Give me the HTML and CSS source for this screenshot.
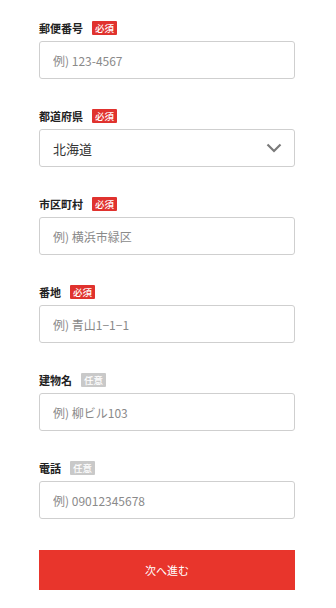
FILE: index.html
```html
<!DOCTYPE html>
<html lang="ja">
<head>
<meta charset="utf-8">
<link rel="stylesheet" href="styles.css">
</head>
<body>
<form class="form">
  <div class="field">
    <div class="label-row"><span class="label">郵便番号</span><span class="badge req">必須</span></div>
    <input class="input" type="text" placeholder="例) 123-4567">
  </div>
  <div class="field">
    <div class="label-row"><span class="label">都道府県</span><span class="badge req">必須</span></div>
    <div class="select">
      <span class="select-value">北海道</span>
      <svg class="chevron" width="16" height="10" viewBox="0 0 16 10"><path d="M1.5 1.5 L8 8 L14.5 1.5" fill="none" stroke="#7a7a7a" stroke-width="2.2"/></svg>
    </div>
  </div>
  <div class="field">
    <div class="label-row"><span class="label">市区町村</span><span class="badge req">必須</span></div>
    <input class="input" type="text" placeholder="例) 横浜市緑区">
  </div>
  <div class="field">
    <div class="label-row"><span class="label">番地</span><span class="badge req">必須</span></div>
    <input class="input" type="text" placeholder="例) 青山1−1−1">
  </div>
  <div class="field">
    <div class="label-row"><span class="label">建物名</span><span class="badge opt">任意</span></div>
    <input class="input" type="text" placeholder="例) 柳ビル103">
  </div>
  <div class="field">
    <div class="label-row"><span class="label">電話</span><span class="badge opt">任意</span></div>
    <input class="input" type="text" placeholder="例) 09012345678">
  </div>
  <button class="submit" type="button">次へ進む</button>
</form>
</body>
</html>
```
FILE: styles.css
```css
html, body {
  margin: 0;
  padding: 0;
  background: #fff;
}
body {
  font-family: "Noto Sans CJK JP", "Liberation Sans", sans-serif;
  color: #333;
}
.form {
  width: 256px;
  margin-left: 39px;
  padding-top: 21px;
  display: flex;
  flex-direction: column;
  gap: 30px;
}
.field {
  display: flex;
  flex-direction: column;
  gap: 6px;
}
.label-row {
  display: flex;
  align-items: center;
  gap: 9px;
  height: 14px;
}
.label {
  font-size: 11px;
  font-weight: 700;
  color: #222;
  line-height: 14px;
}
.badge {
  display: inline-block;
  height: 14px;
  line-height: 14px;
  padding: 0 3px;
  font-size: 9.5px;
  font-weight: 500;
  color: #fff;
  border-radius: 1px;
}
.badge.req { background: #e0322e; }
.badge.opt { background: #c9c9c9; }
.input, .select {
  box-sizing: border-box;
  width: 256px;
  height: 38px;
  border: 1px solid #cfcfcf;
  border-radius: 3px;
  background: #fff;
  margin: 0;
  padding: 0 0 0 13px;
  font-family: "Noto Sans CJK JP", "Liberation Sans", sans-serif;
  font-size: 12px;
  color: #333;
  outline: none;
}
.input::placeholder {
  color: #8a8a8a;
}
.select {
  display: flex;
  align-items: center;
  justify-content: space-between;
  padding-right: 12px;
}
.select-value {
  font-size: 13px;
  color: #333;
}
.chevron { display: block; }
.submit {
  margin-top: 1px;
  height: 40px;
  width: 256px;
  border: none;
  background: #e8352c;
  color: #fff;
  font-family: "Noto Sans CJK JP", "Liberation Sans", sans-serif;
  font-size: 11px;
  padding: 0;
}
```
